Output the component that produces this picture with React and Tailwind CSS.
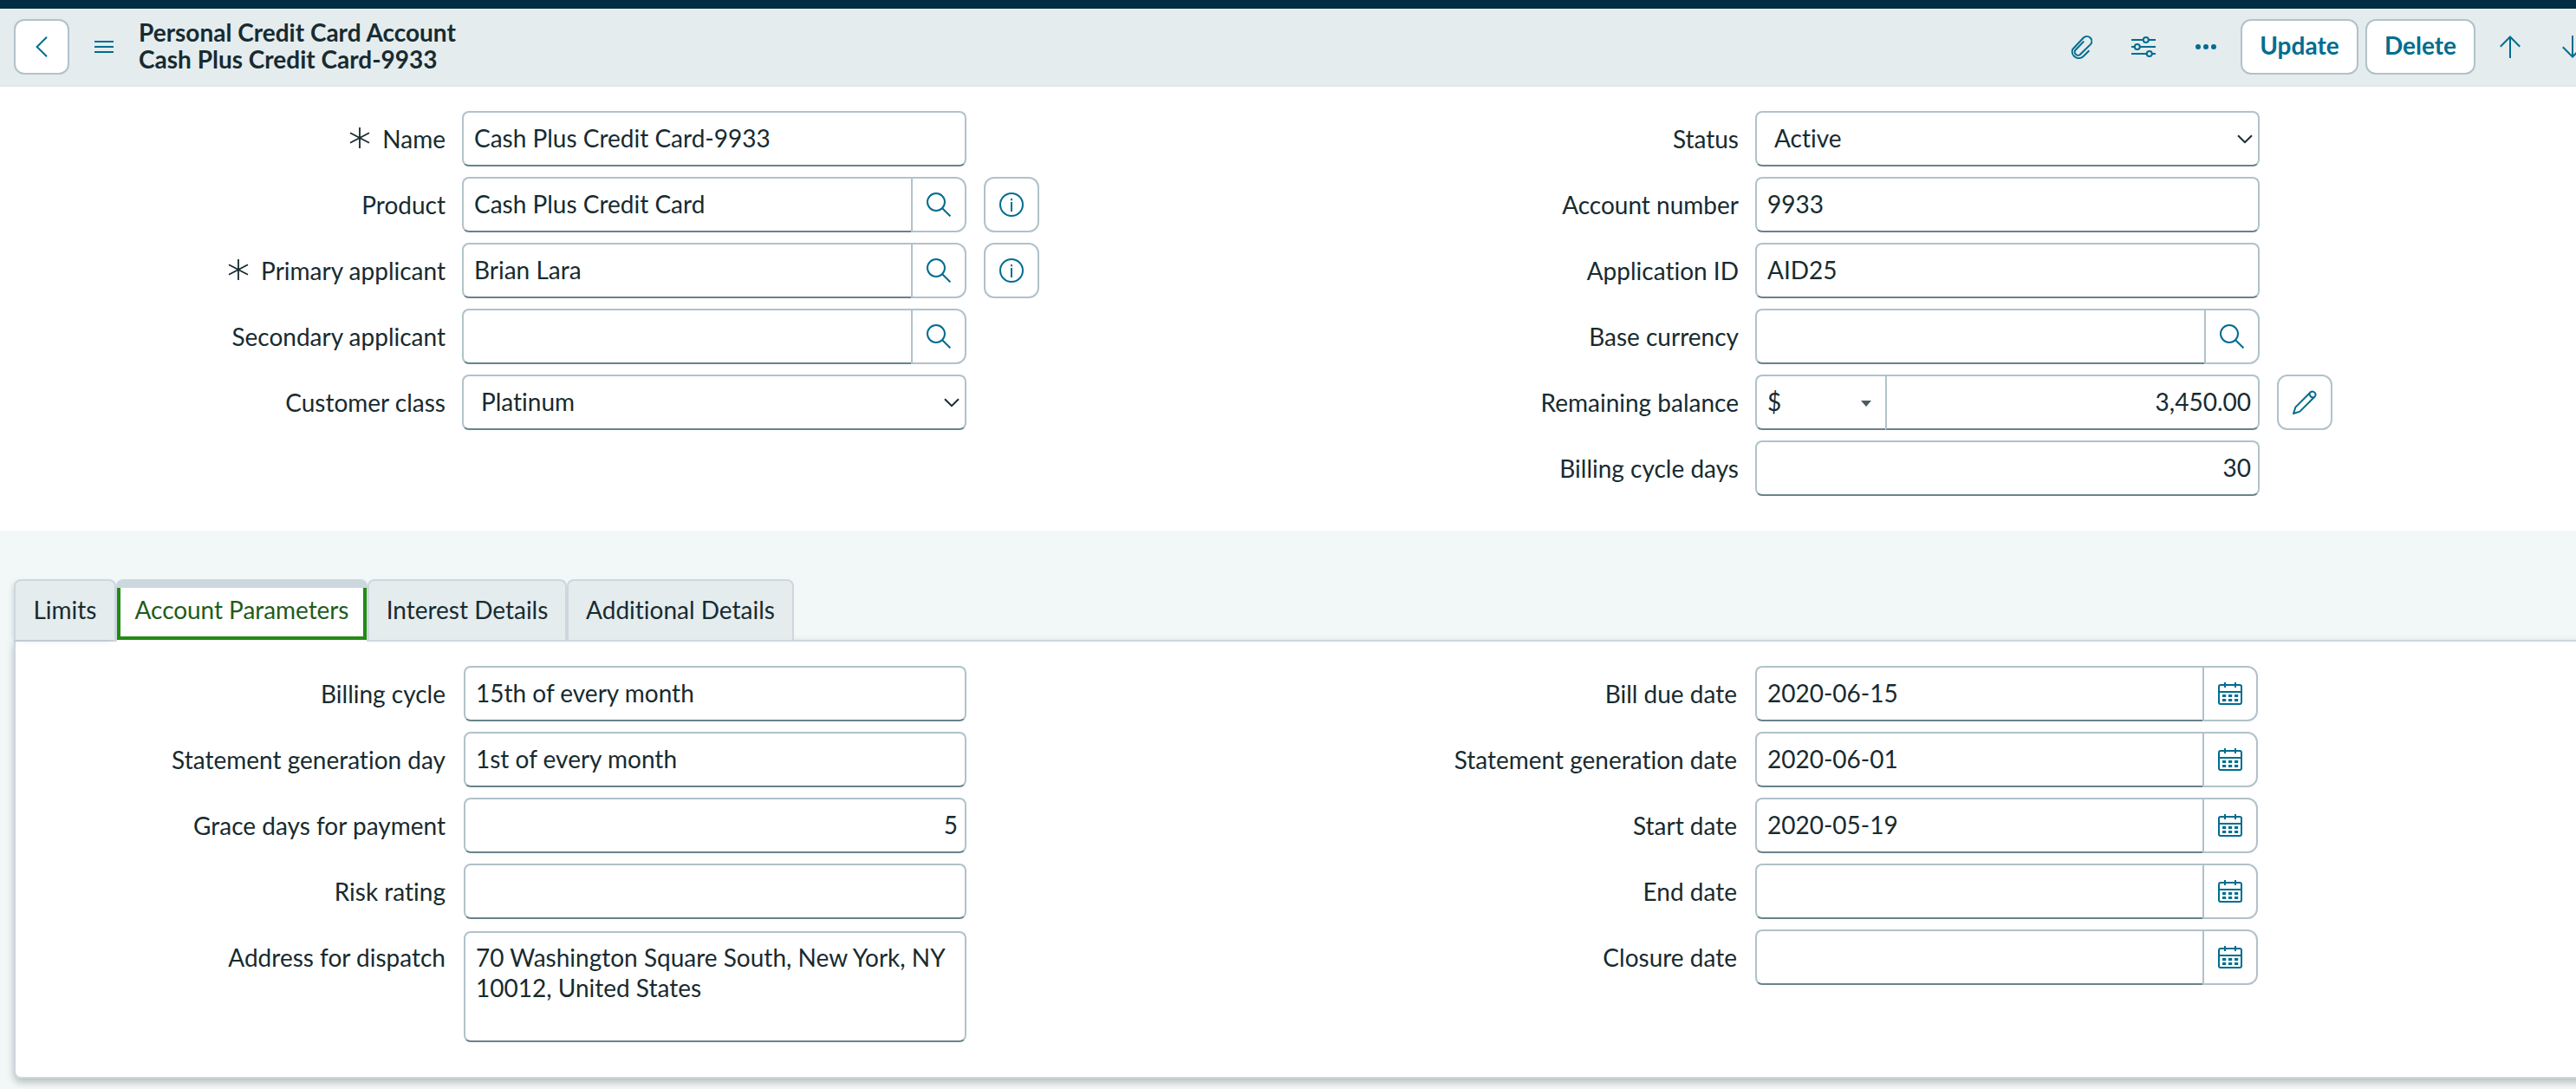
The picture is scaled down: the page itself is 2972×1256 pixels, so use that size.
const INK = 'text-[#172b30]';
const SIDE = 'border-t-[#b1c2ca] border-x-[#b1c2ca] border-b-[#69838c]';

function Svg({ w, h, children, sw = 2, className = '' }) {
  return (
    <svg
      width={w}
      height={h}
      viewBox={`0 0 ${w} ${h}`}
      fill="none"
      stroke="currentColor"
      strokeWidth={sw}
      className={`shrink-0 ${className}`}
    >
      {children}
    </svg>
  );
}

const SearchIcon = () => (
  <Svg w={28} h={28}>
    <circle cx="11" cy="11" r="10" />
    <path d="M18.2 18.2 27.4 27.4" />
  </Svg>
);

const InfoIcon = () => (
  <Svg w={28} h={28}>
    <circle cx="14" cy="14" r="13" />
    <path d="M14 11v11M14 7v2.2" />
  </Svg>
);

const PencilIcon = () => (
  <Svg w={28} h={28}>
    <path d="M1 27 3.4 19.6 20.8 2.2a3.6 3.6 0 0 1 5 5L8.4 24.6Z" strokeLinejoin="round" />
    <path d="M19.4 3.6c.2 3 2 4.800 5 5" />
  </Svg>
);

const CalendarIcon = () => (
  <Svg w={28} h={26}>
    <rect x="1" y="3" width="26" height="22" rx="2" />
    <path d="M1 11h26M8 0v6M20 0v6" />
    <path d="M5 15.500h4.200M12 15.500h4.200M19 15.500h4.200M5 20.500h4.200M12 20.500h4.200M19 20.500h4.200" strokeWidth="3" />
  </Svg>
);

const Chevron = () => (
  <Svg w={18} h={11} className="mr-1.5">
    <path d="M1 1.200 9 9.200 17 1.200" />
  </Svg>
);

const Asterisk = () => (
  <Svg w={24} h={24} sw={1.8} className="-mt-1 mr-3.5">
    <path d="M12 0v24M1 6.200l22 11.600M23 6.200 1 17.800" />
  </Svg>
);

function Field({ label, required, top, small, children }) {
  return (
    <div className={`flex ${top ? 'items-start' : 'items-center'}`}>
      <label className={`flex h-16 items-center justify-end pt-px ${small ? 'w-[496px]' : 'w-[514px]'} ${INK}`}>
        {required && <Asterisk />}
        {label}
      </label>
      {children}
    </div>
  );
}

function Input({ value, end }) {
  return (
    <div
      className={`flex h-16 flex-1 items-center rounded-lg border-2 bg-white pb-px ${SIDE} ${
        end ? 'justify-end pr-2' : 'pl-3'
      }`}
    >
      {value}
    </div>
  );
}

function Select({ value }) {
  return (
    <div className={`flex h-16 flex-1 items-center justify-between rounded-lg border-2 bg-white pl-5 ${SIDE}`}>
      <span className="pb-px">{value}</span>
      <Chevron />
    </div>
  );
}

function Lookup({ value, icon }) {
  return (
    <>
      <div className={`flex h-16 flex-1 items-center rounded-l-lg border-2 border-r-0 bg-white pb-px pl-3 ${SIDE}`}>
        {value}
      </div>
      <button className="flex size-16 items-center justify-center rounded-r-xl border-2 border-[#b1c2ca] bg-white text-[#006d8f]">
        {icon}
      </button>
    </>
  );
}

function Control({ small, extra, children }) {
  return (
    <>
      <div className={`flex ${small ? 'ml-[21px] w-[580px]' : 'ml-[19px] w-[582px]'}`}>{children}</div>
      {extra && (
        <button className="ml-5 flex size-16 items-center justify-center rounded-xl border-2 border-[#b1c2ca] bg-white text-[#006d8f]">
          {extra}
        </button>
      )}
    </>
  );
}

function DetailField({ label, top, children }) {
  return (
    <Field label={label} top={top} small>
      <Control small>{children}</Control>
    </Field>
  );
}

function Tab({ label, className = '' }) {
  return (
    <div
      className={`flex h-[70px] items-center justify-center rounded-t-lg border-2 border-b-0 border-[#cdd7de] bg-[#e4ecee] pb-px ${className}`}
    >
      {label}
    </div>
  );
}

export default function App() {
  return (
    <div className="flex h-[1256px] w-[2972px] flex-col overflow-hidden bg-[#f2f8f8] font-['Lato',sans-serif] text-[28px] leading-[35px] text-[#172b30] [font-variant-ligatures:none]">
      <div className="h-2.5 shrink-0 bg-[#032d42]" />
      <header className="flex h-[90px] shrink-0 items-center border-b-2 border-[#dfe8e9] bg-[#e4ecee] pl-4 text-[#006d8f]">
        <button className="flex h-16 w-16 items-center justify-center rounded-xl border-2 border-[#b1c2ca] bg-white">
          <Svg w={14} h={24}>
            <path d="M13 .8 1.600 12 13 23.200" />
          </Svg>
        </button>
        <Svg w={22} h={14} className="ml-[29px]">
          <path d="M0 1h22M0 7h22M0 13h22" />
        </Svg>
        <h1 className={`ml-[29px] pb-0.5 text-[28px] leading-[31px] font-bold ${INK}`}>
          Personal Credit Card Account
          <br />
          Cash Plus Credit Card-9933
        </h1>
        <div className="ml-auto flex w-[584px] shrink-0 items-center">
          <Svg w={26} h={28}>
            <path
              d="M22.400 18.200 15.600 25a7.600 7.600 0 0 1-12.300-8.300L15.800 3.500a5.600 5.600 0 0 1 8.200 7.600L12.500 22.300a3.600 3.600 0 0 1-6-4.600L16.200 7.600"
              strokeLinejoin="round"
            />
          </Svg>
          <Svg w={28} h={24} className="ml-[45px]">
            <path d="M0 4h13.500M20 4h8M0 12h3.500M10 12h18M0 20h17.500M24 20h4" />
            <circle cx="16.800" cy="4" r="3" />
            <circle cx="6.800" cy="12" r="3" />
            <circle cx="20.800" cy="20" r="3" />
          </Svg>
          <svg width="26" height="6" viewBox="0 0 26 6" fill="currentColor" className="ml-[45px] shrink-0">
            <circle cx="4" cy="3" r="3" />
            <circle cx="13" cy="3" r="3" />
            <circle cx="22" cy="3" r="3" />
          </svg>
          <button className="ml-[27px] h-16 w-[136px] shrink-0 rounded-xl border-2 border-[#b1c2ca] bg-white pb-1 font-bold">
            Update
          </button>
          <button className="ml-2 h-16 w-[127px] shrink-0 rounded-xl border-2 border-[#b1c2ca] bg-white pb-1 font-bold">
            Delete
          </button>
          <Svg w={24} h={26} className="ml-7">
            <path d="M12 26V1.500M.8 12.800 12 1.500l11.200 11.300" />
          </Svg>
          <Svg w={24} h={26} className="ml-12">
            <path d="M12 0v24.500M.8 13.200 12 24.500l11.200-11.300" />
          </Svg>
        </div>
      </header>

      <main className="flex h-[512px] shrink-0 bg-white pt-7">
        <section className="flex w-[1492px] flex-col gap-3">
          <Field label="Name" required>
            <Control><Input value="Cash Plus Credit Card-9933" /></Control>
          </Field>
          <Field label="Product">
            <Control extra={<InfoIcon />}><Lookup value="Cash Plus Credit Card" icon={<SearchIcon />} /></Control>
          </Field>
          <Field label="Primary applicant" required>
            <Control extra={<InfoIcon />}><Lookup value="Brian Lara" icon={<SearchIcon />} /></Control>
          </Field>
          <Field label="Secondary applicant">
            <Control><Lookup icon={<SearchIcon />} /></Control>
          </Field>
          <Field label="Customer class">
            <Control><Select value="Platinum" /></Control>
          </Field>
        </section>
        <section className="flex flex-col gap-3">
          <Field label="Status">
            <Control><Select value="Active" /></Control>
          </Field>
          <Field label="Account number">
            <Control><Input value="9933" /></Control>
          </Field>
          <Field label="Application ID">
            <Control><Input value="AID25" /></Control>
          </Field>
          <Field label="Base currency">
            <Control><Lookup icon={<SearchIcon />} /></Control>
          </Field>
          <Field label="Remaining balance">
            <Control extra={<PencilIcon />}>
              <div className={`flex h-16 w-[150px] items-center justify-between rounded-l-lg border-2 border-r-0 pr-4 pl-3 ${SIDE}`}>
                <span className="pb-px">$</span>
                <span className="mt-[3px] border-x-[6px] border-t-[7px] border-x-transparent border-t-[#4a5c62]" />
              </div>
              <div className={`flex h-16 flex-1 items-center justify-end rounded-r-lg border-2 pr-2 pb-px ${SIDE}`}>
                3,450.00
              </div>
            </Control>
          </Field>
          <Field label="Billing cycle days">
            <Control><Input value="30" end /></Control>
          </Field>
        </section>
      </main>

      <div className="mt-14 ml-4 w-[2980px] shrink-0">
        <nav className="relative z-10 flex h-[70px]">
          <Tab label="Limits" className="w-[118px] shadow-[-3px_2px_6px_-2px_rgba(0,0,0,0.15)]" />
          <div className="h-[72px] w-[290px] overflow-hidden rounded-t-lg bg-[#cdd7de] px-px pt-2.5">
            <div className="h-[62px] bg-white">
              <div className="flex h-[60px] items-center justify-center border-4 border-t-0 border-[#228b14] pb-[5px] tracking-[-0.05px] text-[#1f5c1c]">
                Account Parameters
              </div>
            </div>
          </div>
          <Tab label="Interest Details" className="w-[230px]" />
          <Tab label="Additional Details" className="w-[262px]" />
        </nav>
        <div className="flex h-[506px] rounded-bl-lg border-2 border-[#cdd7de] bg-white pt-7 shadow-[0_4px_10px_rgba(0,0,0,0.26)]">
          <section className="flex w-[1490px] flex-col gap-3">
            <DetailField label="Billing cycle"><Input value="15th of every month" /></DetailField>
            <DetailField label="Statement generation day"><Input value="1st of every month" /></DetailField>
            <DetailField label="Grace days for payment"><Input value="5" end /></DetailField>
            <DetailField label="Risk rating"><Input /></DetailField>
            <DetailField label="Address for dispatch" top>
              <div className={`mt-0.5 h-32 flex-1 rounded-lg border-2 bg-white pt-[11px] pl-3 ${SIDE}`}>
                70 Washington Square South, New York, NY
                <br />
                10012, United States
              </div>
            </DetailField>
          </section>
          <section className="flex flex-col gap-3">
            <DetailField label="Bill due date"><Lookup value="2020-06-15" icon={<CalendarIcon />} /></DetailField>
            <DetailField label="Statement generation date"><Lookup value="2020-06-01" icon={<CalendarIcon />} /></DetailField>
            <DetailField label="Start date"><Lookup value="2020-05-19" icon={<CalendarIcon />} /></DetailField>
            <DetailField label="End date"><Lookup icon={<CalendarIcon />} /></DetailField>
            <DetailField label="Closure date"><Lookup icon={<CalendarIcon />} /></DetailField>
          </section>
        </div>
      </div>
    </div>
  );
}
